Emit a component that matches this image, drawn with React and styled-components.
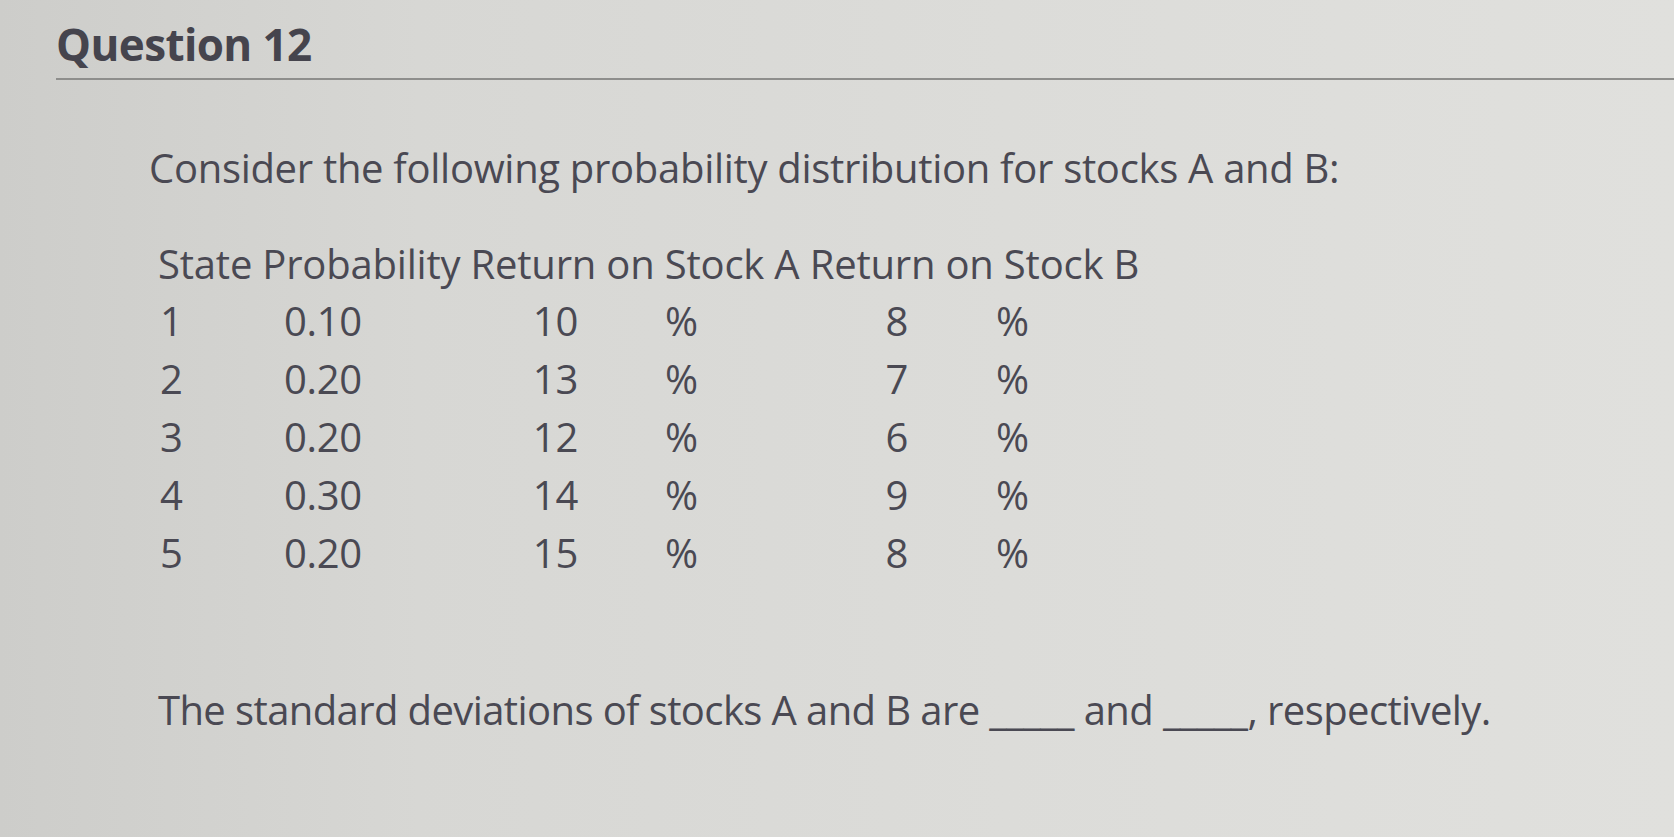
import React from "react";
import styled, { createGlobalStyle } from "styled-components";

const Global = createGlobalStyle`
  html, body { margin: 0; padding: 0; }
  body {
    width: 1674px;
    height: 837px;
    overflow: hidden;
    font-family: "Open Sans", "Noto Sans", sans-serif;
  }
`;

const Page = styled.div`
  width: 1674px;
  height: 837px;
  box-sizing: border-box;
  background: linear-gradient(90deg, #cdcdca 0%, #d7d7d4 25%, #dcdcd9 60%, #e0e0dd 100%);
  padding-top: 14px;
  color: #4a4953;
`;

const Header = styled.div`
  padding-left: 56px;
`;

const Title = styled.h1`
  margin: 0;
  font-size: 44px;
  line-height: 60px;
  font-weight: 700;
  letter-spacing: -0.6px;
  color: #45444d;
`;

const Rule = styled.hr`
  margin: 4px 0 0 0;
  border: 0;
  height: 2px;
  background: #8e8e8c;
`;

const Body = styled.div`
  padding-left: 149px;
`;

const Text = styled.p`
  margin: ${(p) => p.$mt || 0}px 0 0 0;
  font-size: 40px;
  line-height: 56px;
  font-weight: 500;
  letter-spacing: ${(p) => p.$ls ?? -0.3}px;
  padding-left: ${(p) => p.$pl || 0}px;
  white-space: nowrap;
`;

const Grid = styled.div`
  display: grid;
  grid-template-columns: 124px 198px 96px 132px 198px auto;
  padding-left: 11px;
  font-size: 40px;
  line-height: 58px;
  font-weight: 500;
  letter-spacing: -0.3px;
`;

const Cell = styled.div`
  text-align: ${(p) => p.$align || "left"};
  padding-left: ${(p) => p.$pl || 0}px;
`;

const rows = [
  [1, "0.10", 10, 8],
  [2, "0.20", 13, 7],
  [3, "0.20", 12, 6],
  [4, "0.30", 14, 9],
  [5, "0.20", 15, 8],
];

export default function App() {
  return (
    <Page>
      <Global />
      <Header>
        <Title>Question 12</Title>
        <Rule />
      </Header>
      <Body>
        <Text $mt={60}>
          Consider the following probability distribution for stocks A and B:
        </Text>
        <Text $mt={40} $pl={9} $ls={-0.2}>
          State Probability Return on Stock A Return on Stock B
        </Text>
        <Grid>
          {rows.map(([s, p, a, b]) => (
            <React.Fragment key={s}>
              <Cell>{s}</Cell>
              <Cell>{p}</Cell>
              <Cell $align="right">{a}</Cell>
              <Cell $pl={87}>%</Cell>
              <Cell $align="right">{b}</Cell>
              <Cell $pl={88}>%</Cell>
            </React.Fragment>
          ))}
        </Grid>
        <Text $mt={100} $pl={9} $ls={-0.6}>
          The standard deviations of stocks A and B are _____ and _____, respectively.
        </Text>
      </Body>
    </Page>
  );
}
